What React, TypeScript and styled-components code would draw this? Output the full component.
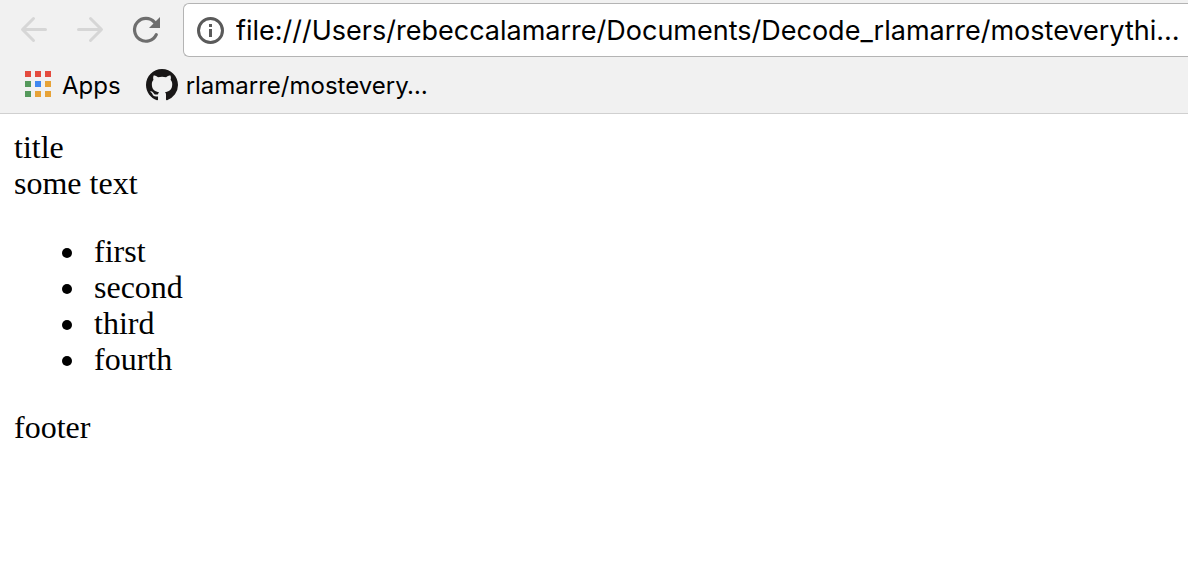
import React from "react";
import styled, { createGlobalStyle } from "styled-components";

const GlobalStyle = createGlobalStyle`
  *, *::before, *::after { box-sizing: border-box; }
  body { margin: 0; background: #fff; color: #000; overflow-x: hidden; }
`;

const Chrome = styled.header`
  background: #f1f1f1;
  border-bottom: 1px solid #d0d0d0;
  font-family: Inter, "Liberation Sans", sans-serif;
`;

const Toolbar = styled.div`
  display: flex;
  align-items: center;
  gap: 28px;
  padding: 3px 0 0 20px;
`;

const NavButton = styled.button`
  flex: none;
  display: block;
  width: 28px;
  height: 28px;
  padding: 0;
  border: 0;
  background: none;
  color: ${(p) => (p.disabled ? "#d6d6d6" : "#6e6e6e")};
`;

const Icon = styled.svg`
  flex: none;
  display: block;
`;

const AddressBar = styled.label`
  flex: 1;
  min-width: 0;
  display: flex;
  align-items: center;
  gap: 11px;
  height: 54px;
  margin-left: -5px;
  padding: 2px 0 0 12px;
  border: 1px solid #b4b4b4;
  border-right: 0;
  border-radius: 6px 0 0 6px;
  background: #fff;
  color: #5a5a5a;
`;

const AddressInput = styled.input`
  flex: 1;
  min-width: 0;
  padding: 0;
  border: 0;
  outline: 0;
  background: none;
  color: #000;
  font: 27px/36px Inter, "Liberation Sans", sans-serif;
`;

const Bookmarks = styled.nav`
  display: flex;
  align-items: center;
  gap: 25px;
  height: 56px;
  padding-left: 25px;
`;

const Bookmark = styled.a<{ $gap: number }>`
  display: flex;
  align-items: center;
  gap: ${(p) => p.$gap}px;
  color: #000;
  font-size: 24px;
  line-height: 32px;
  white-space: nowrap;
  text-decoration: none;
`;

const BookmarkLabel = styled.span`
  padding-top: 2px;
`;

const Page = styled.main`
  padding: 15px 14px;
  font: 32px/36px "Liberation Serif", "Times New Roman", serif;
`;

const List = styled.ul`
  margin: 32px 0;
  padding-left: 48px;
  list-style: none;
`;

const Item = styled.li`
  display: flex;
  align-items: center;
  gap: 22px;

  &::before {
    content: "";
    width: 10px;
    height: 10px;
    margin-top: 4px;
    border-radius: 50%;
    background: #000;
  }
`;

const tiles = [
  "#e44b3f", "#e44b3f", "#e44b3f",
  "#55995c", "#4088f0", "#e7a337",
  "#55995c", "#e7a337", "#e7a337",
];

const ArrowIcon = ({ forward = false }: { forward?: boolean }) => (
  <Icon width="28" height="28" viewBox="0 0 28 28" fill="none" stroke="currentColor" strokeWidth="3" strokeLinecap="round" strokeLinejoin="round">
    <path d={forward ? "M2.5 13.5H25M14.5 2.5 25.5 13.5 14.5 24.5" : "M25.5 13.5H3M13.5 2.5 2.5 13.5 13.5 24.5"} />
  </Icon>
);

const ReloadIcon = () => (
  <Icon width="28" height="28" viewBox="0 0 28 28">
    <path d="M24.3 18.6A11.4 11.4 0 1 1 22.6 6.4" fill="none" stroke="currentColor" strokeWidth="3.2" strokeLinecap="round" />
    <path d="M28 1v11H17z" fill="currentColor" />
  </Icon>
);

const InfoIcon = () => (
  <Icon width="29" height="28" viewBox="0 0 29 28">
    <circle cx="14.5" cy="13.5" r="12" fill="none" stroke="currentColor" strokeWidth="3" />
    <path d="M13 7h3v3h-3zM13 12h3v8h-3z" fill="currentColor" />
  </Icon>
);

const AppsIcon = () => (
  <Icon width="26" height="28" viewBox="0 0 26 28">
    {tiles.map((fill, i) => (
      <rect key={i} x={(i % 3) * 10} y={Math.floor(i / 3) * 10} width="6" height="6" fill={fill} />
    ))}
  </Icon>
);

const GitHubIcon = () => (
  <Icon width="32" height="32" viewBox="0 0 16 16" fill="#191717">
    <path d="M8 0C3.58 0 0 3.58 0 8c0 3.54 2.29 6.53 5.47 7.59.4.07.55-.17.55-.38 0-.19-.01-.82-.01-1.49-2.01.37-2.53-.49-2.69-.94-.09-.23-.48-.94-.82-1.13-.28-.15-.68-.52-.01-.53.63-.01 1.08.58 1.23.82.72 1.21 1.87.87 2.33.66.07-.52.28-.87.51-1.07-1.78-.2-3.64-.89-3.64-3.95 0-.87.31-1.59.82-2.15-.08-.2-.36-1.02.08-2.12 0 0 .67-.21 2.2.82.64-.18 1.32-.27 2-.27s1.36.09 2 .27c1.53-1.04 2.2-.82 2.2-.82.44 1.1.16 1.92.08 2.12.51.56.82 1.27.82 2.15 0 3.07-1.87 3.75-3.65 3.95.29.25.54.73.54 1.48 0 1.07-.01 1.93-.01 2.2 0 .21.15.46.55.38A8.01 8.01 0 0 0 16 8c0-4.42-3.58-8-8-8z" />
  </Icon>
);

export default function App() {
  return (
    <>
      <GlobalStyle />
      <Chrome>
        <Toolbar>
          <NavButton type="button" aria-label="Back" disabled><ArrowIcon /></NavButton>
          <NavButton type="button" aria-label="Forward" disabled><ArrowIcon forward /></NavButton>
          <NavButton type="button" aria-label="Reload"><ReloadIcon /></NavButton>
          <AddressBar>
            <InfoIcon />
            <AddressInput
              type="text"
              aria-label="Address"
              spellCheck={false}
              defaultValue="file:///Users/rebeccalamarre/Documents/Decode_rlamarre/mosteverythi…"
            />
          </AddressBar>
        </Toolbar>
        <Bookmarks>
          <Bookmark href="#apps" $gap={11}><AppsIcon /><BookmarkLabel>Apps</BookmarkLabel></Bookmark>
          <Bookmark href="#rlamarre" $gap={8}><GitHubIcon /><BookmarkLabel>rlamarre/mostevery…</BookmarkLabel></Bookmark>
        </Bookmarks>
      </Chrome>
      <Page>
        <div>title</div>
        <div>some text</div>
        <List>
          <Item>first</Item>
          <Item>second</Item>
          <Item>third</Item>
          <Item>fourth</Item>
        </List>
        <footer>footer</footer>
      </Page>
    </>
  );
}
